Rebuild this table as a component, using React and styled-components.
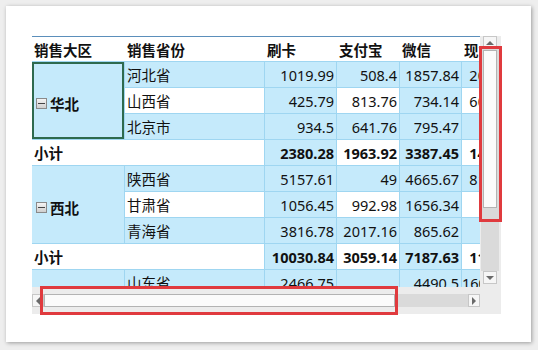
import { createGlobalStyle, styled, css } from 'styled-components';

const GlobalStyle = createGlobalStyle`
  body {
    margin: 0;
    background: #eeeeee;
    font-family: "Noto Sans", "Noto Sans CJK SC", sans-serif;
  }
`;

const BLUE = '#c5eafb';
const LINE = '#9fd6f1';

const Card = styled.div`
  box-sizing: border-box;
  margin: 6px;
  width: 525px;
  height: 336px;
  background: #fff;
  box-shadow: 1px 1px 4px rgba(0, 0, 0, 0.35);
  padding: 30px 0 0 26px;
`;

const Widget = styled.div`
  position: relative;
  display: grid;
  grid-template-columns: 448px 21px;
  grid-template-rows: 251px 27px;
  width: 469px;
`;

const Viewport = styled.div`
  overflow: hidden;
  background: #fff;
`;

const Table = styled.table`
  border-collapse: separate;
  border-spacing: 0;
  table-layout: fixed;
  width: 494px;
  border-top: 1px solid #5b8fbb;
  font-size: 14.5px;
  color: #111;
`;

const HeadCell = styled.th`
  box-sizing: border-box;
  height: 25px;
  padding: 0 0 0 2px;
  text-align: left;
  font-weight: 700;
  white-space: nowrap;
  border-bottom: 1px solid ${LINE};
  background: #fff;
`;

const Cell = styled.td`
  box-sizing: border-box;
  height: 26px;
  padding: ${(p) => (p.$num ? '0 2px 0 0' : '0 0 0 2px')};
  text-align: ${(p) => (p.$num ? 'right' : 'left')};
  font-weight: ${(p) => (p.$bold ? 700 : 400)};
  white-space: nowrap;
  overflow: hidden;
  background: ${(p) => (p.$shade ? BLUE : '#fff')};
  border-bottom: 1px solid ${LINE};
  border-right: 1px solid ${LINE};
  ${(p) =>
    p.$selected &&
    css`
      box-shadow: inset 0 0 0 2px #2e6a4e;
    `}
`;

const RegionLabel = styled.span`
  display: inline-flex;
  align-items: center;
  gap: 3px;
  font-weight: 700;
  padding-left: 2px;
`;

const Toggle = styled.span`
  box-sizing: border-box;
  width: 11px;
  height: 11px;
  border: 1px solid #8a8a8a;
  background: linear-gradient(#f4f4f4, #cfcfcf);
  display: inline-flex;
  align-items: center;
  justify-content: center;

  &::after {
    content: '';
    width: 7px;
    height: 1px;
    background: #444;
  }
`;

const VBar = styled.div`
  background: #ececec;
  display: flex;
  flex-direction: column;
  padding: 0 2px 3px 1px;
`;

const Track = styled.div`
  flex: 1;
  display: flex;
  flex-direction: ${(p) => (p.$vertical ? 'column' : 'row')};
  background: #dadada;
`;

const Thumb = styled.div`
  box-sizing: border-box;
  background: #fbfbfb;
  border: 1px solid #b3b3b3;
  ${(p) =>
    p.$vertical
      ? css`
          margin: 1px 2px 0;
          height: 158px;
        `
      : css`
          width: 351px;
          height: 13px;
        `}
`;

const ArrowBtn = styled.div`
  box-sizing: border-box;
  flex: none;
  width: ${(p) => (p.$vertical ? 'auto' : '12px')};
  height: 13px;
  margin: ${(p) => (p.$vertical ? '0 2px' : '0')};
  background: #f6f6f6;
  border: 1px solid #c7c7c7;
  display: flex;
  align-items: center;
  justify-content: center;

  &::after {
    content: '';
    width: 0;
    height: 0;
    ${(p) =>
      p.$dir === 'up' &&
      css`
        border-left: 4px solid transparent;
        border-right: 4px solid transparent;
        border-bottom: 4px solid #6a6a6a;
      `}
    ${(p) =>
      p.$dir === 'down' &&
      css`
        border-left: 4px solid transparent;
        border-right: 4px solid transparent;
        border-top: 4px solid #6a6a6a;
      `}
    ${(p) =>
      p.$dir === 'left' &&
      css`
        border-top: 4px solid transparent;
        border-bottom: 4px solid transparent;
        border-right: 4px solid #6a6a6a;
      `}
    ${(p) =>
      p.$dir === 'right' &&
      css`
        border-top: 4px solid transparent;
        border-bottom: 4px solid transparent;
        border-left: 4px solid #6a6a6a;
      `}
  }
`;

const HBar = styled.div`
  background: #ececec;
  display: flex;
  padding: 7px 0 7px;
`;

const Corner = styled.div`
  background: #ececec;
`;

const Highlight = styled.div`
  position: absolute;
  box-sizing: border-box;
  border: 3px solid #e03a3e;
  left: ${(p) => p.$left}px;
  top: ${(p) => p.$top}px;
  width: ${(p) => p.$w}px;
  height: ${(p) => p.$h}px;
  pointer-events: none;
`;

const columns = [
  { title: '销售大区', width: 93 },
  { title: '销售省份', width: 140 },
  { title: '刷卡', width: 72 },
  { title: '支付宝', width: 63 },
  { title: '微信', width: 62 },
  { title: '现金', width: 64 },
];

const groups = [
  {
    region: '华北',
    selected: true,
    provinces: [
      ['河北省', '1019.99', '508.4', '1857.84', '2045.36'],
      ['山西省', '425.79', '813.76', '734.14', '6012.58'],
      ['北京市', '934.5', '641.76', '795.47', '85.2'],
    ],
    total: ['2380.28', '1963.92', '3387.45', '1414.32'],
  },
  {
    region: '西北',
    provinces: [
      ['陕西省', '5157.61', '49', '4665.67', '8174.45'],
      ['甘肃省', '1056.45', '992.98', '1656.34', '46.8'],
      ['青海省', '3816.78', '2017.16', '865.62', '52.3'],
    ],
    total: ['10030.84', '3059.14', '7187.63', '1171.55'],
  },
  {
    region: '华东',
    provinces: [
      ['山东省', '2466.75', '', '4490.5', '16032.51'],
      ['江苏省', '1875.3', '620.4', '1320.88', '402.6'],
    ],
    total: ['4342.05', '620.4', '5811.38', '16435.11'],
  },
];

// blue when the row is a striped one or the column is 刷卡 / 微信
const shadeFor = (rowIdx, colIdx) => rowIdx % 2 === 0 || colIdx === 0 || colIdx === 2;

function App() {
  let rowIdx = 0;
  const body = [];

  groups.forEach((g) => {
    g.provinces.forEach(([name, ...vals], i) => {
      const r = rowIdx++;
      body.push(
        <tr key={`${g.region}-${name}`}>
          {i === 0 && (
            <Cell rowSpan={g.provinces.length} $shade $selected={g.selected}>
              <RegionLabel>
                <Toggle />
                {g.region}
              </RegionLabel>
            </Cell>
          )}
          <Cell $shade={r % 2 === 0}>{name}</Cell>
          {vals.map((v, c) => (
            <Cell key={c} $num $shade={shadeFor(r, c)}>
              {v}
            </Cell>
          ))}
        </tr>
      );
    });
    const r = rowIdx++;
    body.push(
      <tr key={`${g.region}-total`}>
        <Cell colSpan={2} $bold>
          小计
        </Cell>
        {g.total.map((v, c) => (
          <Cell key={c} $num $bold $shade={shadeFor(r, c)}>
            {v}
          </Cell>
        ))}
      </tr>
    );
  });

  return (
    <>
      <GlobalStyle />
      <Card>
        <Widget>
          <Viewport>
            <Table>
              <colgroup>
                {columns.map((c) => (
                  <col key={c.title} style={{ width: c.width }} />
                ))}
              </colgroup>
              <thead>
                <tr>
                  {columns.map((c) => (
                    <HeadCell key={c.title}>{c.title}</HeadCell>
                  ))}
                </tr>
              </thead>
              <tbody>{body}</tbody>
            </Table>
          </Viewport>

          <VBar>
            <ArrowBtn $vertical $dir="up" />
            <Track $vertical>
              <Thumb $vertical />
            </Track>
            <ArrowBtn $vertical $dir="down" />
          </VBar>

          <HBar>
            <ArrowBtn $dir="left" />
            <Track>
              <Thumb />
            </Track>
            <ArrowBtn $dir="right" />
          </HBar>
          <Corner />

          <Highlight $left={447} $top={10} $w={23} $h={176} />
          <Highlight $left={8} $top={250} $w={358} $h={29} />
        </Widget>
      </Card>
    </>
  );
}

export default App;
